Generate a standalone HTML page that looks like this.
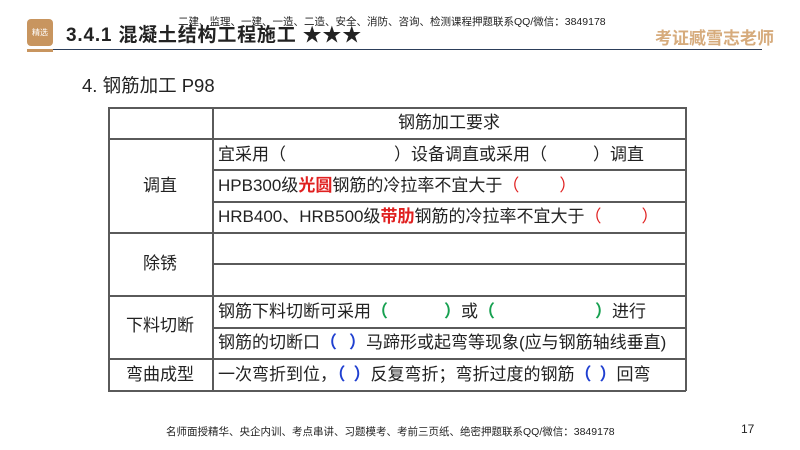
<!DOCTYPE html>
<html><head><meta charset="utf-8"><style>
body{margin:0;width:800px;height:450px;background:#fff;position:relative;overflow:hidden;font-family:"Liberation Sans","Noto Sans CJK SC",sans-serif;color:#222}
.a{position:absolute;white-space:nowrap}
.h{position:absolute;height:1.5px;background:#5a5a5a}
.v{position:absolute;width:1.5px;background:#5a5a5a}
.t{position:absolute;font-size:17px;line-height:20px;white-space:nowrap;color:#222}
.r{color:#e02020;font-weight:bold}.rp{color:#e02020}.b{color:#1f3fd0;font-weight:bold}.g{color:#16a050;font-weight:bold}
.s{display:inline-block}
</style></head><body>
<div class="a" style="left:27px;top:19px;width:26px;height:27px;background:#c8955f;border-radius:4px;color:#fff;font-size:8px;line-height:27px;text-align:center">精选</div>
<div class="a" style="left:27px;top:49px;width:26px;height:3px;background:#c8955f"></div>
<div class="a" style="left:53px;top:49px;width:709px;height:1px;background:#2c3e5a"></div>
<div class="a" style="left:66px;top:20px;font-size:19px;font-weight:bold;letter-spacing:0.8px">3.4.1 混凝土结构工程施工 ★★★</div>
<div class="a" style="left:178px;top:14px;font-size:10.5px">二建、监理、一建、一造、二造、安全、消防、咨询、检测课程押题联系QQ/微信：3849178</div>
<div class="a" style="left:655px;top:24px;font-size:17px;font-weight:bold;color:#d6ab7c">考证臧雪志老师</div>
<div class="a" style="left:82px;top:72px;font-size:18.5px">4. 钢筋加工 P98</div>

<div class="h" style="left:108px;top:107px;width:578px"></div>
<div class="h" style="left:108px;top:138px;width:578px"></div>
<div class="h" style="left:213px;top:169px;width:473px"></div>
<div class="h" style="left:213px;top:201px;width:473px"></div>
<div class="h" style="left:108px;top:232px;width:578px"></div>
<div class="h" style="left:213px;top:263px;width:473px"></div>
<div class="h" style="left:108px;top:295px;width:578px"></div>
<div class="h" style="left:213px;top:327px;width:473px"></div>
<div class="h" style="left:108px;top:358px;width:578px"></div>
<div class="h" style="left:108px;top:390px;width:578px"></div>
<div class="v" style="left:108px;top:107px;height:284px"></div>
<div class="v" style="left:212px;top:107px;height:284px"></div>
<div class="v" style="left:685px;top:107px;height:284px"></div>

<div class="t" style="left:398px;top:113px">钢筋加工要求</div>
<div class="t" style="left:143px;top:176px">调直</div>
<div class="t" style="left:143px;top:254px">除锈</div>
<div class="t" style="left:126px;top:316px">下料切断</div>
<div class="t" style="left:126px;top:365px">弯曲成型</div>
<div class="t" style="left:218px;top:145px">宜采用（<span class="s" style="width:108px"></span>）设备调直或采用（<span class="s" style="width:46px"></span>）调直</div>
<div class="t" style="left:218px;top:176px">HPB300级<span class="r">光圆</span>钢筋的冷拉率不宜大于<span class="rp">（<span class="s" style="width:40px"></span>）</span></div>
<div class="t" style="left:218px;top:207px">HRB400、HRB500级<span class="r">带肋</span>钢筋的冷拉率不宜大于<span class="rp">（<span class="s" style="width:40px"></span>）</span></div>
<div class="t" style="left:218px;top:302px">钢筋下料切断可采用<span class="g">（<span class="s" style="width:56px"></span>）</span>或<span class="g">（<span class="s" style="width:100px"></span>）</span>进行</div>
<div class="t" style="left:218px;top:333px">钢筋的切断口<span class="b">（<span class="s" style="width:12px"></span>）</span>马蹄形或起弯等现象(应与钢筋轴线垂直)</div>
<div class="t" style="left:218px;top:365px">一次弯折到位，<span class="b">（<span class="s" style="width:8px"></span>）</span>反复弯折；弯折过度的钢筋<span class="b">（<span class="s" style="width:8px"></span>）</span>回弯</div>

<div class="a" style="left:166px;top:424px;font-size:10.5px">名师面授精华、央企内训、考点串讲、习题模考、考前三页纸、绝密押题联系QQ/微信：3849178</div>
<div class="a" style="left:741px;top:422px;font-size:12px">17</div>
</body></html>
